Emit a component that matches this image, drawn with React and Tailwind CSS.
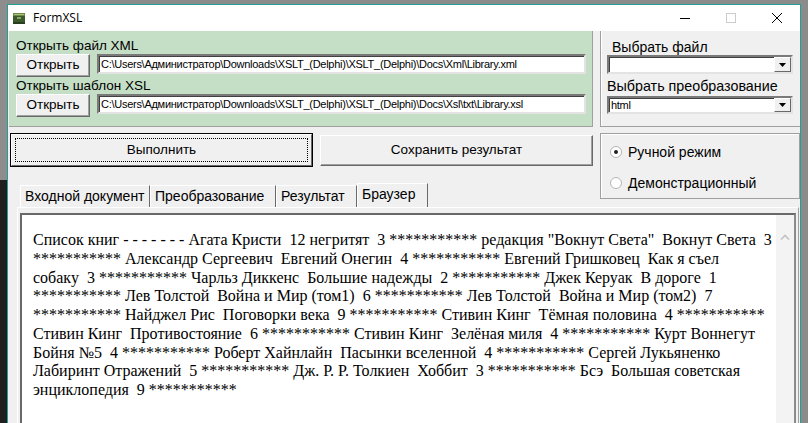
const ui = { fontFamily: '"Liberation Sans", Arial, sans-serif' };

const lines = [
  'Список книг - - - - - - - Агата Кристи  12 негритят  3 *********** редакция "Вокнут Света"  Вокнут Света  3',
  '*********** Александр Сергеевич  Евгений Онегин  4 *********** Евгений Гришковец  Как я съел',
  'собаку  3 *********** Чарльз Диккенс  Большие надежды  2 *********** Джек Керуак  В дороге  1',
  '*********** Лев Толстой  Война и Мир (том1)  6 *********** Лев Толстой  Война и Мир (том2)  7',
  '*********** Найджел Рис  Поговорки века  9 *********** Стивин Кинг  Тёмная половина  4 ***********',
  'Стивин Кинг  Противостояние  6 *********** Стивин Кинг  Зелёная миля  4 *********** Курт Воннегут',
  'Бойня №5  4 *********** Роберт Хайнлайн  Пасынки вселенной  4 *********** Сергей Лукьяненко',
  'Лабиринт Отражений  5 *********** Дж. Р. Р. Толкиен  Хоббит  3 *********** Бсэ  Большая советская',
  'энциклопедия  9 ***********',
];

const BookIcon = () => (
  <svg width="14" height="13" viewBox="0 0 14 13">
    <rect x="1" y="1" width="12" height="11" fill="#3d5a2c" />
    <rect x="1" y="1" width="12" height="3" fill="#6b8a4a" />
    <rect x="2" y="2" width="10" height="1" fill="#a9c27a" />
    <rect x="1" y="10" width="12" height="2" fill="#2a3d1d" />
    <rect x="5" y="5" width="4" height="2" fill="#8da663" />
  </svg>
);

const Button = ({ children, className = '' }) => (
  <div
    className={`flex items-center justify-center bg-[#f0f0f0] border border-t-white border-l-white border-r-[#696969] border-b-[#696969] shadow-[inset_-1px_-1px_0_#a0a0a0] text-[13.5px] text-black ${className}`}
  >
    {children}
  </div>
);

const Field = ({ children, className = '' }) => (
  <div
    className={`flex items-center bg-white border-2 border-t-[#7a7a7a] border-l-[#7a7a7a] border-r-[#e3e3e3] border-b-[#e3e3e3] shadow-[inset_1px_1px_0_#404040] ${className}`}
  >
    {children}
  </div>
);

const Select = ({ value, className = '' }) => (
  <Field className={className}>
    <span className="flex-1 pl-[2px] text-[11px] leading-none text-black tracking-[-0.3px]">{value}</span>
    <div className="w-[17px] h-full flex items-center justify-center bg-[#f0f0f0] border border-t-white border-l-white border-r-[#696969] border-b-[#696969]">
      <svg width="7" height="4" viewBox="0 0 7 4">
        <path d="M0 0h7L3.5 4z" fill="#000" />
      </svg>
    </div>
  </Field>
);

const Radio = ({ checked, label }) => (
  <div className="flex items-center h-[16px]">
    <svg width="12" height="12" viewBox="0 0 12 12" className="ml-[9px]">
      <circle cx="6" cy="6" r="5.5" fill="#fff" stroke="#b4b4b4" />
      {checked && <circle cx="6" cy="6" r="2" fill="#222" />}
    </svg>
    <span className="ml-[6px] text-[14px] text-black">{label}</span>
  </div>
);

const Tab = ({ children, active, className = '' }) => (
  <div
    className={`flex items-center pl-[4px] text-[14px] text-black bg-[#f0f0f0] border-t border-l border-t-white border-l-white border-r border-r-[#696969] ${
      active ? 'h-[24px] pb-[3px]' : 'h-[22px]'
    } ${className}`}
  >
    {children}
  </div>
);

export default function App() {
  return (
    <div className="w-[808px] h-[423px] flex bg-[#8b8b8b] overflow-hidden" style={ui}>
      <div className="w-[7px] flex flex-col shrink-0">
        <div className="h-[180px] bg-[#8d8d8d]" />
        <div className="flex-1 bg-[#1f1f1f]" />
      </div>

      <div className="w-[794px] mt-[4px] shrink-0 flex flex-col border-x border-t border-[#23a093] bg-[#f0f0f0]">
        {/* title bar */}
        <div className="h-[26px] bg-white flex items-center">
          <div className="ml-[4px]">
            <BookIcon />
          </div>
          <span className="ml-[7px] text-[12px] text-black" style={{ fontFamily: '"Open Sans", "Noto Sans", sans-serif' }}>
            FormXSL
          </span>
          <div className="ml-auto flex h-full">
            <div className="w-[46px] flex items-center justify-center">
              <div className="w-[10px] h-px bg-black" />
            </div>
            <div className="w-[46px] flex items-center justify-center">
              <div className="w-[10px] h-[10px] border border-[#cccccc]" />
            </div>
            <div className="w-[46px] flex items-center justify-center">
              <svg width="10" height="10" viewBox="0 0 10 10">
                <path d="M0 0L10 10M10 0L0 10" stroke="#000" strokeWidth="1" />
              </svg>
            </div>
          </div>
        </div>

        {/* top row */}
        <div className="h-[96px] flex">
          <div className="ml-[1px] w-[584px] bg-[#c5dfc6] border-r border-b border-[#a0a0a0] pt-[6px] pl-[7px] pr-[6px]">
            <div className="h-[17px] leading-[17px] text-[13.5px] text-black">Открыть файл XML</div>
            <div className="h-[23px] flex gap-[7px]">
              <Button className="w-[74px] h-[23px]">Открыть</Button>
              <Field className="flex-1 h-[20px]">
                <span className="pl-[2px] text-[11px] leading-none text-black tracking-[-0.27px]">
                  C:\Users\Администратор\Downloads\XSLT_(Delphi)\XSLT_(Delphi)\Docs\Xml\Library.xml
                </span>
              </Field>
            </div>
            <div className="h-[17px] leading-[17px] text-[13.5px] text-black">Открыть шаблон XSL</div>
            <div className="h-[23px] flex gap-[7px]">
              <Button className="w-[74px] h-[23px]">Открыть</Button>
              <Field className="flex-1 h-[20px]">
                <span className="pl-[2px] text-[11px] leading-none text-black tracking-[-0.27px]">
                  C:\Users\Администратор\Downloads\XSLT_(Delphi)\XSLT_(Delphi)\Docs\Xsl\txt\Library.xsl
                </span>
              </Field>
            </div>
          </div>

          <div className="ml-[7px] flex-1 border-l border-b border-[#a0a0a0] shadow-[inset_1px_0_0_#fff] pt-[8px] pl-[6px] pr-[7px]">
            <div className="h-[16px] leading-[16px] pl-[5px] text-[14px] text-black">Выбрать файл</div>
            <Select value="" className="h-[19px]" />
            <div className="mt-[4px] h-[17px] leading-[17px] text-[14.3px] text-black">Выбрать преобразование</div>
            <Select value="html" className="h-[18px] mt-[1px]" />
          </div>
        </div>

        {/* buttons + tabs row */}
        <div className="h-[80px] flex">
          <div className="w-[585px] flex flex-col">
            <div className="mt-[6px] flex items-start">
              <div className="ml-[2px] w-[303px] h-[34px] border border-black">
                <div className="w-full h-full p-[3px] bg-[#f0f0f0] border border-t-white border-l-white border-r-[#696969] border-b-[#696969]">
                  <div className="w-full h-full border border-dotted border-black flex items-center justify-center text-[13.5px] text-black">
                    Выполнить
                  </div>
                </div>
              </div>
              <Button className="ml-[7px] mt-[2px] w-[273px] h-[31px]">Сохранить результат</Button>
            </div>
            <div className="mt-auto ml-[12px] h-[24px] flex items-end">
              <Tab className="w-[130px]">Входной документ</Tab>
              <Tab className="w-[126px]">Преобразование</Tab>
              <Tab className="w-[81px]">Результат</Tab>
              <Tab active className="w-[71px]">Браузер</Tab>
            </div>
          </div>

          <div className="ml-[7px] mt-[6px] flex-1 h-[66px] border border-[#a0a0a0] shadow-[inset_1px_1px_0_#fff] flex flex-col pt-[10px] gap-[15px]">
            <Radio checked label="Ручной режим" />
            <Radio label="Демонстрационный" />
          </div>
        </div>

        {/* browser panel */}
        <div className="flex-1 ml-[9px] w-[782px] border-t border-l border-white border-r border-r-[#a0a0a0] pt-[5px] pl-[2px] pr-[2px] flex flex-col">
          <div className="flex-1 flex border-t-2 border-l-2 border-r-2 border-t-[#696969] border-l-[#696969] border-r-[#8a8a8a]">
            <div
              className="flex-1 bg-white pl-[11px] pt-[16px] text-[16px] leading-[18.75px] text-black"
              style={{ fontFamily: '"Liberation Serif", "Times New Roman", serif' }}
            >
              {lines.map((l, i) => (
                <div key={i} className="whitespace-pre">
                  {l}
                </div>
              ))}
            </div>
            <div className="w-[18px] bg-[#f3f3f3] flex justify-center pt-[19px]">
              <svg width="10" height="6" viewBox="0 0 10 6">
                <path d="M1 5.5L5 1.5L9 5.5" stroke="#c2c2c2" strokeWidth="1.6" fill="none" />
              </svg>
            </div>
          </div>
        </div>
      </div>

      <div className="w-[7px] shrink-0 bg-[#8b8b8b]" />
    </div>
  );
}
